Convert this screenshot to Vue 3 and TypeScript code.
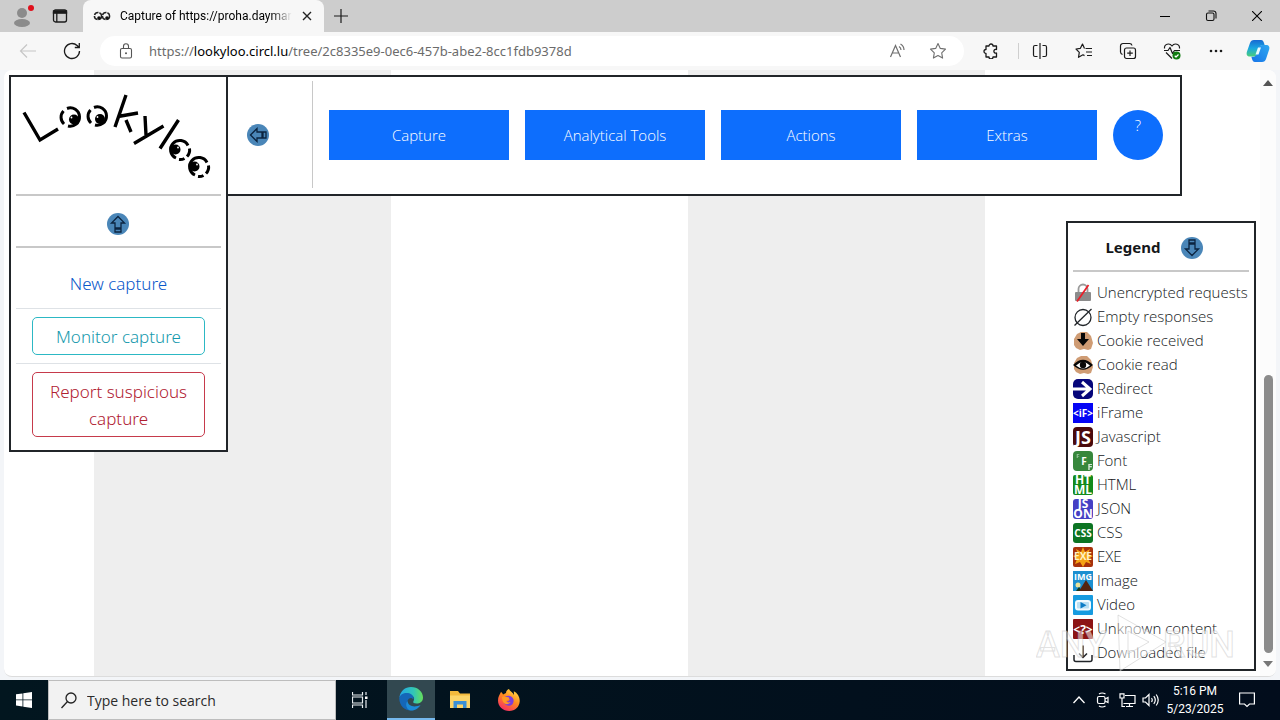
<script setup lang="ts">
interface LegendItem {
  kind: string
  label: string
}

interface Tile {
  kind: string
  text: string
  fill: string
  radius: number
  size: number
  y: number
}

const menus: string[] = ['Capture', 'Analytical Tools', 'Actions', 'Extras']

const legend: LegendItem[] = [
  { kind: 'insecure', label: 'Unencrypted requests' },
  { kind: 'empty', label: 'Empty responses' },
  { kind: 'received', label: 'Cookie received' },
  { kind: 'read', label: 'Cookie read' },
  { kind: 'redirect', label: 'Redirect' },
  { kind: 'iframe', label: 'iFrame' },
  { kind: 'js', label: 'Javascript' },
  { kind: 'font', label: 'Font' },
  { kind: 'html', label: 'HTML' },
  { kind: 'json', label: 'JSON' },
  { kind: 'css', label: 'CSS' },
  { kind: 'exe', label: 'EXE' },
  { kind: 'image', label: 'Image' },
  { kind: 'video', label: 'Video' },
  { kind: 'unknown', label: 'Unknown content' },
  { kind: 'download', label: 'Downloaded file' },
]

const tiles: Tile[] = [
  { kind: 'iframe', text: '<iF>', fill: '#0505f5', radius: 0, size: 10, y: 14 },
  { kind: 'js', text: 'JS', fill: '#4a0a0c', radius: 4, size: 18, y: 17 },
  { kind: 'css', text: 'CSS', fill: '#0c7423', radius: 3, size: 10, y: 14 },
  { kind: 'unknown', text: '<?>', fill: '#8c1414', radius: 1, size: 12, y: 15 },
]

const tileFor = (kind: string): Tile | undefined => tiles.find((t) => t.kind === kind)
</script>

<template>
  <div class="desktop">
    <header class="tabstrip">
      <button class="plain profile" aria-label="Profile">
        <svg width="28" height="28" viewBox="0 0 28 28">
          <circle cx="14" cy="11" r="5" fill="#8b8b8b" />
          <ellipse cx="14" cy="21" rx="8" ry="4" fill="#8b8b8b" />
          <circle cx="23" cy="6" r="3" fill="#e0101c" />
        </svg>
      </button>
      <button class="plain tab-actions" aria-label="Tab actions">
        <svg width="16" height="16" viewBox="0 0 16 16" fill="none" stroke="#1b1b1b" stroke-width="1.3">
          <rect x="1.5" y="2" width="13" height="12" rx="2" />
          <path d="M1.5 3h13v2.2h-13zM4.8 5v9" fill="#1b1b1b" />
        </svg>
      </button>
      <div class="tab">
        <svg width="18" height="12" viewBox="0 0 18 12" fill="none" stroke="#222" stroke-width="1.5">
          <circle cx="5" cy="6" r="3.6" stroke-dasharray="5 1" />
          <circle cx="13" cy="6" r="3.6" stroke-dasharray="5 1" />
          <circle cx="6" cy="8" r="1.8" fill="#111" stroke="none" />
          <circle cx="14" cy="8" r="1.8" fill="#111" stroke="none" />
        </svg>
        <span class="tab-title">Capture of https://proha.daymar</span>
        <button class="plain tab-close" aria-label="Close tab">
          <svg width="10" height="10" viewBox="0 0 10 10" stroke="#222" stroke-width="1.4"><path d="M1 1l8 8M9 1l-8 8" /></svg>
        </button>
      </div>
      <button class="plain new-tab" aria-label="New tab">
        <svg width="14" height="14" viewBox="0 0 14 14" stroke="#1b1b1b" stroke-width="1.2"><path d="M7 0v14M0 7h14" /></svg>
      </button>
      <div class="grow"></div>
      <button class="plain win" aria-label="Minimize">
        <svg width="10" height="10" viewBox="0 0 10 10"><path d="M0 5.5h10" stroke="#000" /></svg>
      </button>
      <button class="plain win" aria-label="Restore">
        <svg width="12" height="12" viewBox="0 0 12 12" fill="none" stroke="#111" stroke-width="1.1">
          <rect x="1.5" y="3" width="7.5" height="7.5" rx="1.5" />
          <path d="M3.5 1h5a2.5 2.5 0 0 1 2.5 2.5v5" />
        </svg>
      </button>
      <button class="plain win" aria-label="Close">
        <svg width="10" height="10" viewBox="0 0 10 10" stroke="#000" stroke-width="1.1"><path d="M0 0l10 10M10 0L0 10" /></svg>
      </button>
    </header>

    <nav class="toolbar">
      <button class="plain tool first" aria-label="Back">
        <svg width="18" height="18" viewBox="0 0 18 18" fill="none" stroke="#c6c6c6" stroke-width="1.2"><path d="M17 9H1.5M8 2.5L1.5 9 8 15.5" /></svg>
      </button>
      <button class="plain tool" aria-label="Refresh">
        <svg width="18" height="18" viewBox="0 0 18 18" fill="none" stroke="#1b1b1b" stroke-width="1.3">
          <path d="M16.5 9a7.5 7.5 0 1 1-2.4-5.5L16 5.3M16.3 1v4.5h-4.5" />
        </svg>
      </button>
      <div class="address">
        <svg width="14" height="16" viewBox="0 0 14 16" fill="none" stroke="#555" stroke-width="1.1">
          <rect x="1.5" y="5.5" width="11" height="9.5" rx="1.5" />
          <path d="M4.5 5.5V3.3a2.500 2.500 0 0 1 5 0v2.200" />
          <circle cx="7" cy="10.3" r="1" fill="#555" stroke="none" />
        </svg>
        <a class="url" href="#">https://<b>lookyloo.circl.lu</b>/tree/2c8335e9-0ec6-457b-abe2-8cc1fdb9378d</a>
        <button class="plain in-bar" aria-label="Read aloud">
          <svg width="18" height="16" viewBox="0 0 18 16" fill="none" stroke="#6f6f6f" stroke-width="1.2">
            <path d="M1.5 14L6.5 2.5 11.5 14M3.2 10h6.6M10 3.5a4 4 0 0 1 2 3.5M11.5 1a7 7 0 0 1 3.5 6" />
          </svg>
        </button>
        <button class="plain in-bar" aria-label="Favorite">
          <svg width="18" height="18" viewBox="0 0 18 18" fill="none" stroke="#6f6f6f" stroke-width="1.1" stroke-linejoin="round">
            <path d="M9 1.5l2.3 4.9 5.2.7-3.8 3.7.9 5.3L9 13.6l-4.6 2.5.9-5.3L1.5 7.1l5.2-.7z" />
          </svg>
        </button>
      </div>
      <button class="plain tool ext" aria-label="Extensions">
        <svg width="16" height="16" viewBox="0 0 16 16" fill="none" stroke="#1b1b1b" stroke-width="1.3" stroke-linejoin="round">
          <path d="M3 3h3a2 2 0 0 1 4 0h3.5v3.5a1.900 1.900 0 1 0 0 3.5v4H10a2 2 0 0 1-4 0H3v-3.500a2 2 0 0 1 0-4z" />
        </svg>
      </button>
      <span class="sep"></span>
      <button class="plain tool" aria-label="Split screen">
        <svg width="16" height="16" viewBox="0 0 16 16" fill="none" stroke="#1b1b1b" stroke-width="1.2">
          <path d="M5.5 2.5H3A1.5 1.5 0 0 0 1.5 4v8A1.5 1.5 0 0 0 3 13.5h2.5M10.5 2.5H13A1.5 1.5 0 0 1 14.5 4v8a1.5 1.5 0 0 1-1.5 1.5h-2.5M8 0v16" />
        </svg>
      </button>
      <button class="plain tool" aria-label="Favorites">
        <svg width="18" height="18" viewBox="0 0 18 18" fill="none" stroke="#1b1b1b" stroke-width="1.2" stroke-linejoin="round">
          <path d="M10.5 6.5H17M11 10h6M12 13.5h5M9.5 6.5L7.5 2 5.4 6.3l-4.4.7 3.300 3.300-.8 5L8 12.800l1.500.8" />
        </svg>
      </button>
      <button class="plain tool" aria-label="Collections">
        <svg width="18" height="18" viewBox="0 0 18 18" fill="none" stroke="#1b1b1b" stroke-width="1.2">
          <rect x="5.5" y="6" width="11" height="10.5" rx="2" />
          <path d="M3.5 12.5A3 3 0 0 1 1.5 10V4a2.5 2.5 0 0 1 2.5-2.5h6.5A2.5 2.5 0 0 1 13 3.5M11 8.5v5.5M8.2 11.200h5.600" />
        </svg>
      </button>
      <button class="plain tool" aria-label="Browser essentials">
        <svg width="18" height="18" viewBox="0 0 18 18" fill="none" stroke="#1b1b1b" stroke-width="1.2" stroke-linejoin="round">
          <path d="M1.5 6.5C1 2 6.5.5 9 4c2.500-3.500 8-2 7.500 2.500M1 8.500h4l2-3 2.500 6 2-3H17M3 10.500l6 6" />
          <circle cx="13.5" cy="13.5" r="4" fill="#107c10" stroke="none" />
          <path d="M11.700 13.800l1.300 1.200 2.500-2.500" stroke="#fff" />
        </svg>
      </button>
      <button class="plain tool" aria-label="More">
        <svg width="14" height="4" viewBox="0 0 14 4" fill="#1b1b1b"><circle cx="2" cy="2" r="1.3" /><circle cx="7" cy="2" r="1.3" /><circle cx="12" cy="2" r="1.3" /></svg>
      </button>
      <button class="plain tool copilot" aria-label="Copilot">
        <svg width="24" height="24" viewBox="0 0 24 24">
          <defs>
            <linearGradient id="cpA" x1="0" y1="0" x2="0" y2="1"><stop offset="0" stop-color="#1769d2" /><stop offset="0.5" stop-color="#1aa7e0" /><stop offset="1" stop-color="#4bcf7a" /></linearGradient>
            <linearGradient id="cpB" x1="1" y1="0" x2="0" y2="1"><stop offset="0" stop-color="#2fa8f0" /><stop offset="1" stop-color="#1673e8" /></linearGradient>
          </defs>
          <path d="M8 1h7c2 0 2.500 1.500 3 3l.6 2c-3-.4-4.600.5-5.400 3l-2 6c-.6 2-1.800 2.500-3.600 2.500H4c-3 0-4-2-3-5L4 4c.7-2 1.800-3 4-3z" fill="url(#cpA)" />
          <path d="M16 23H9c-2 0-2.500-1.500-3-3l-.6-2.300c3 .4 4.600-.5 5.400-3l2-6c.6-2 1.800-2.700 3.600-2.700H20c3 0 4 2 3 5l-3 9c-.7 2-1.800 3-4 3z" fill="url(#cpB)" />
          <path d="M12 8.500h3l-2.500 7H9.500z" fill="#e9fbff" />
        </svg>
      </button>
    </nav>

    <div class="frame">
      <main class="page">
        <div class="stripes" aria-hidden="true"><i></i><i></i><i></i></div>

        <aside class="side">
          <svg class="logo" viewBox="16 77 205 117" role="img" aria-label="Lookyloo" fill="none" stroke="#000" stroke-width="3.4">
            <path d="M24 112.500L40 140 58 129M126 95L115 127M118 116.500l20-3.500M126 120l5 12M145 116l1 19M163.500 126L134 143.500M178.500 120L160 148.500" />
            <g stroke-width="3">
              <path d="M67 108.500a9.200 9.200 0 1 1 1 17.500M64 124a9.200 9.200 0 0 1-.5-13" />
              <path d="M94 107.500a9.200 9.200 0 1 1 1 17.500M91 123a9.200 9.200 0 0 1-.5-13" />
              <path d="M188 145.500a9.200 9.200 0 1 0-12 12.500M189.500 148.500a9.200 9.200 0 0 1-2.500 8M184.500 158.500a9.200 9.200 0 0 1-5.500 1" />
              <path d="M207 162.500a9.200 9.200 0 1 0-12 12.500M208.500 165.500a9.200 9.200 0 0 1-2.500 8M203.500 175.500a9.200 9.200 0 0 1-5.500 1" />
            </g>
            <g fill="#000" stroke="none">
              <circle cx="74" cy="119.500" r="5" /><circle cx="100" cy="119" r="5" />
              <circle cx="175.500" cy="149.500" r="5" /><circle cx="194.500" cy="166.500" r="5" />
            </g>
            <g fill="#fff" stroke="none">
              <circle cx="71.500" cy="117.500" r="0.900" /><circle cx="97.500" cy="117" r="0.900" />
              <circle cx="178" cy="147.500" r="0.900" /><circle cx="197" cy="164.500" r="0.900" />
            </g>
          </svg>
          <hr class="rule" />
          <button class="plain collapse" aria-label="Collapse up">
            <svg width="22" height="22" viewBox="0 0 22 22" fill="none" stroke="#0b2440" stroke-width="1.3">
              <circle cx="11" cy="11" r="11" fill="#4a86b8" stroke="none" />
              <path d="M11 3.500l6.500 6.500H14v5H8v-5H4.500zM8 16h6v3H8z" />
            </svg>
          </button>
          <hr class="rule" />
          <div class="row new"><a href="#">New capture</a></div>
          <div class="row"><button class="outline teal">Monitor capture</button></div>
          <div class="row"><button class="outline red">Report suspicious capture</button></div>
        </aside>

        <section class="topbar">
          <button class="plain" aria-label="Collapse left">
            <svg width="22" height="22" viewBox="0 0 22 22" fill="none" stroke="#0b2440" stroke-width="1.3">
              <circle cx="11" cy="11" r="11" fill="#4a86b8" stroke="none" />
              <path d="M3.500 11L10 4.500V8h5v6h-5v3.500zM16 8v6h3V8z" />
            </svg>
          </button>
          <span class="vr"></span>
          <button v-for="m in menus" :key="m" class="menu">{{ m }}</button>
          <button class="help">?</button>
        </section>

        <section class="legend">
          <div class="legend-head">
            <strong>Legend</strong>
            <button class="plain" aria-label="Collapse down">
              <svg width="22" height="22" viewBox="0 0 22 22" fill="none" stroke="#0b2440" stroke-width="1.3">
                <circle cx="11" cy="11" r="11" fill="#4a86b8" stroke="none" />
                <path d="M11 18.500L4.500 12H8V7h6v5h3.500zM8 3h6v3H8z" />
              </svg>
            </button>
          </div>
          <hr class="rule" />
          <ul>
            <li v-for="item in legend" :key="item.kind">
              <svg width="20" height="20" viewBox="0 0 20 20" font-family="Open Sans, sans-serif" font-weight="700">
                <template v-if="tileFor(item.kind)">
                  <rect width="20" height="20" :rx="tileFor(item.kind)?.radius" :fill="tileFor(item.kind)?.fill" />
                  <text x="10" :y="tileFor(item.kind)?.y" :font-size="tileFor(item.kind)?.size" fill="#fff" text-anchor="middle">{{ tileFor(item.kind)?.text }}</text>
                </template>
                <g v-else-if="item.kind === 'insecure'">
                  <path d="M5.500 9V6a4.500 4.500 0 0 1 9 0v3" fill="none" stroke="#9a9a9a" stroke-width="1.8" />
                  <rect x="2" y="9" width="16" height="9" rx="1" fill="#8b8b8b" />
                  <path d="M4 18.500L15.500 2" stroke="#e8202a" stroke-width="1.8" />
                </g>
                <g v-else-if="item.kind === 'empty'" fill="none" stroke="#212529" stroke-width="1.3">
                  <circle cx="10" cy="10.5" r="8" /><path d="M1.500 18.500L18.500 2" />
                </g>
                <g v-else-if="item.kind === 'received'">
                  <path d="M1 8l3-5 4-2 6 0 4 4 2 7-2 6-3 1-4-1-4 1-4-2-2-3z" fill="#cf9c74" />
                  <path d="M8 2h4v6h4l-6 7-6-7h4z" fill="#080808" />
                </g>
                <g v-else-if="item.kind === 'read'">
                  <path d="M1 8l3-5 4-2 6 0 4 4 2 7-2 6-3 1-4-1-4 1-4-2-2-3z" fill="#cf9c74" />
                  <path d="M0 10Q10-.5 20 10 10 19.500 0 10z" fill="#080808" />
                  <path d="M3 10.500q7-7 14 0-7 6-14 0z" fill="#fff" />
                  <circle cx="10" cy="10" r="3.2" fill="#080808" />
                </g>
                <g v-else-if="item.kind === 'redirect'">
                  <rect width="20" height="20" rx="5" fill="#06067a" />
                  <path d="M0 10h17M9 3l8 7-8 7" fill="none" stroke="#fff" stroke-width="3" />
                </g>
                <g v-else-if="item.kind === 'font'" fill="#fff" text-anchor="middle">
                  <rect width="20" height="20" rx="4" fill="#37873c" />
                  <text x="5" y="7" font-size="6" opacity="0.5">F</text>
                  <text x="11" y="14" font-size="10">F</text>
                  <text x="17" y="19" font-size="9" opacity="0.8">F</text>
                </g>
                <g v-else-if="item.kind === 'html'" fill="#fff" text-anchor="middle" font-size="12">
                  <rect width="20" height="20" rx="2" fill="#138a1b" />
                  <text x="10" y="9">HT</text><text x="10" y="19">ML</text>
                </g>
                <g v-else-if="item.kind === 'json'" fill="#fff" text-anchor="middle" font-size="12">
                  <rect width="20" height="20" rx="3" fill="#4540c4" />
                  <text x="10" y="9">JS</text><text x="10" y="19">ON</text>
                </g>
                <g v-else-if="item.kind === 'exe'">
                  <rect width="20" height="20" rx="2" fill="#a8320c" />
                  <path d="M10 0l2 5 5-3-2 5 5 2-5 3 3 5-5-2-3 5-3-5-5 2 2-5-4-3 5-2-2-5 5 3z" fill="#f5a316" />
                  <text x="10" y="13" font-size="10" fill="#fff3c4" text-anchor="middle">EXE</text>
                </g>
                <g v-else-if="item.kind === 'image'">
                  <rect width="20" height="20" fill="#1c8fd0" />
                  <circle cx="5" cy="14" r="2.5" fill="#e8e29a" />
                  <path d="M3 20l3-4 3 4z" fill="#153a1c" />
                  <path d="M6 20l7-11 7 11z" fill="#54240f" />
                  <text x="10" y="9" font-size="9" fill="#fff" text-anchor="middle">IMG</text>
                </g>
                <g v-else-if="item.kind === 'video'">
                  <rect width="20" height="20" rx="1" fill="#179be0" />
                  <rect x="2" y="5" width="16" height="10.5" rx="3" fill="#f3fbff" />
                  <rect x="4" y="7" width="12" height="6.5" rx="1" fill="#b9dff3" />
                  <path d="M7.500 7l6 3.200-6 3.300z" fill="#0c7cc6" />
                </g>
                <g v-else fill="none" stroke="#212529" stroke-width="1.5">
                  <path d="M1 12v4.500A2 2 0 0 0 3 18.500h14a2 2 0 0 0 2-2V12M10 2.500v11.500M6 10.500l4 4 4-4" />
                </g>
              </svg>
              <span>{{ item.label }}</span>
            </li>
          </ul>
        </section>

        <svg class="mark" width="200" height="60" viewBox="0 0 200 60" font-family="Roboto, sans-serif" font-size="36" font-weight="500" aria-hidden="true">
          <g fill="#fff" fill-opacity="0.5" stroke="#b4b4b4" stroke-opacity="0.4" stroke-width="1">
            <text x="0" y="44">ANY</text>
            <path d="M82 2l48 27-46 29z" />
            <path d="M92 18l21 11-21 12z" />
            <text x="127" y="44">RUN</text>
          </g>
        </svg>
      </main>
      <div class="scrollbar" aria-hidden="true">
        <svg width="10" height="6" viewBox="0 0 10 6"><path d="M5 0l5 6H0z" fill="#555" /></svg>
        <div class="track"><div class="thumb"></div></div>
        <svg width="10" height="6" viewBox="0 0 10 6"><path d="M5 6L0 0h10z" fill="#777" /></svg>
      </div>
    </div>

    <footer class="taskbar">
      <button class="plain start" aria-label="Start">
        <svg width="16" height="16" viewBox="0 0 16 16" fill="#fff"><path d="M0 2.300L6.500 1.400v6.100H0zM7.300 1.300L16 0v7.500H7.300zM0 8.300h6.500v6.200L0 13.600zM7.300 8.300H16V16l-8.700-1.300z" /></svg>
      </button>
      <label class="search">
        <svg width="16" height="17" viewBox="0 0 16 17" fill="none" stroke="#222" stroke-width="1.3"><circle cx="10" cy="6" r="5" /><path d="M6.500 9.500L.5 16" /></svg>
        <input type="text" placeholder="Type here to search" aria-label="Search" />
      </label>
      <button class="plain app view" aria-label="Task view">
        <svg width="16" height="16" viewBox="0 0 16 16" fill="none" stroke="#e8edf0" stroke-width="1.2"><path d="M.5 0v3h10V0M.5 16v-3h10v3M.5 5h10v6H.5zM14 0v3M14 8v8" /><path d="M13 4.500h2.500v2.500H13z" fill="#fff" stroke="none" /></svg>
      </button>
      <button class="plain app active" aria-label="Edge">
        <svg width="24" height="24" viewBox="0 0 24 24">
          <defs>
            <linearGradient id="edA" x1="0" y1="0" x2="1" y2="0"><stop offset="0" stop-color="#22a7e8" /><stop offset="0.6" stop-color="#32c6b6" /><stop offset="1" stop-color="#66df5a" /></linearGradient>
          </defs>
          <path d="M.5 10C1.500 4 6 0 12 0c7 0 12 5 12 10.500 0 4-3 6-6.500 6-2.500 0-4-.8-3-2.500 1.800-3-.5-6-4-6-4 0-8 2-10 2z" fill="url(#edA)" />
          <path d="M.2 11C1 7.500 5 5.500 9 6c4 .5 6.500 4 5.300 6.500C13 10 9.500 10.500 8.500 14c-1 4.500 3.500 8.500 9 7.500-5 4-17 2-17.300-10.500z" fill="#1567b8" />
          <path d="M8.500 14c.5 5 6.500 7 13 4-3 5-7.500 6-11 5.300C6.500 21 6.500 16 8.500 14z" fill="#1c8bd8" />
        </svg>
      </button>
      <button class="plain app" aria-label="File Explorer">
        <svg width="22" height="20" viewBox="0 0 22 20"><path d="M1 1h8l2 2.500h10V18H1z" fill="#f3b93c" /><path d="M1 5.500h20V18H1z" fill="#fcd468" /><path d="M4.500 18v-7h13v7H14v-3.500H8V18z" fill="#3a8fd6" /></svg>
      </button>
      <button class="plain app" aria-label="Firefox">
        <svg width="24" height="24" viewBox="0 0 24 24">
          <defs>
            <linearGradient id="ffA" x1="0.8" y1="0" x2="0.2" y2="1"><stop offset="0" stop-color="#ffe14a" /><stop offset="0.45" stop-color="#ff8a1e" /><stop offset="1" stop-color="#f5256a" /></linearGradient>
          </defs>
          <path d="M4 4c1 .6 1.500 1.500 2 2.500L9 5c0-2 1.500-3.500 3-4 .5 2 4 3.500 5 6l-.2-3.800C20.500 5 23 9 22.700 13.500 22.300 19 18 23 12.300 23 6 23 1 18.500 1 12.500 1 9 2.500 6.500 4 4z" fill="url(#ffA)" />
          <path d="M7 10c2-3.500 8.500-3 9.500 1.500.7 4-2 6.500-5 6.300C8 17.500 6.500 15 7 13l4 .5 2-2-3-1.500z" fill="#7b3ddb" />
          <path d="M5 9c2-1 4 .2 6 .3 1.500.2 1.700 1.200.5 2l-2 1.500c0 1.500 2 2.200 4 1.200-1 2.500-4.500 3-6.500 1C5.500 13.500 5 11 5 9z" fill="#ff9a24" />
        </svg>
      </button>
      <div class="grow"></div>
      <button class="plain tray" aria-label="Show hidden icons">
        <svg width="12" height="8" viewBox="0 0 12 8" fill="none" stroke="#fff" stroke-width="1.3"><path d="M.5 7L6 1l5.500 6" /></svg>
      </button>
      <button class="plain tray" aria-label="Meet Now">
        <svg width="14" height="16" viewBox="0 0 14 16" fill="none" stroke="#fff" stroke-width="1.2"><rect x="1.5" y="4.5" width="7.5" height="7" rx="1.5" /><path d="M9 7l3-1.500v5L9 9M3 2Q6 0 9.500 2M3 14q3 2 6.500 0" /></svg>
      </button>
      <button class="plain tray" aria-label="Network">
        <svg width="17" height="15" viewBox="0 0 17 15" fill="none" stroke="#fff" stroke-width="1.2"><path d="M6 2.500h10v8H4.500M10.500 10.500v3M7 13.500h7M3 5v8.500h3M1 .8h4V5H1z" /></svg>
      </button>
      <button class="plain tray" aria-label="Volume">
        <svg width="18" height="14" viewBox="0 0 18 14" fill="none" stroke="#fff" stroke-width="1.2"><path d="M1 5h2.500L7 1.500v11L3.500 9H1zM9.500 5q1.500 2 0 4M11.800 3.200q3 3.800 0 7.600M14.200 1.500q4 5.500 0 11" /></svg>
      </button>
      <div class="clock"><span>5:16 PM</span><span>5/23/2025</span></div>
      <button class="plain notify" aria-label="Notifications">
        <svg width="16" height="16" viewBox="0 0 16 16" fill="none" stroke="#fff" stroke-width="1.2"><path d="M.6 1h14.800v11H10.500L8 14.500 5.500 12H.6z" /></svg>
      </button>
    </footer>
  </div>
</template>

<style>
body {
  margin: 0;
}
</style>

<style scoped>
.desktop {
  display: flex;
  flex-direction: column;
  height: 100vh;
  overflow: hidden;
  background: #f3f5f8;
  font-family: "Open Sans", "Noto Sans", sans-serif;
  color: #14171a;
}
.desktop * {
  box-sizing: border-box;
}
svg {
  display: block;
  flex: none;
}
button,
input {
  font-family: inherit;
}
.plain {
  display: flex;
  align-items: center;
  justify-content: center;
  padding: 0;
  border: 0;
  background: none;
}
.grow {
  flex: 1;
}
.tabstrip {
  display: flex;
  flex: none;
  height: 32px;
  background: #cdcdcd;
}
.profile {
  width: 44px;
}
.tab-actions {
  width: 32px;
}
.tab {
  display: flex;
  align-items: center;
  width: 241px;
  margin-left: 7px;
  padding: 0 10px;
  border-radius: 8px 8px 0 0;
  background: #f7f7f7;
}
.tab-title {
  flex: 1;
  margin-left: 9px;
  overflow: hidden;
  white-space: nowrap;
  font-family: Roboto, sans-serif;
  font-size: 12px;
  line-height: 16px;
  color: #000;
  mask-image: linear-gradient(to right, #000 88%, transparent);
}
.tab-close {
  width: 14px;
  height: 20px;
  margin-left: 8px;
}
.new-tab {
  width: 34px;
}
.win {
  width: 46px;
}
.toolbar {
  display: flex;
  flex: none;
  align-items: center;
  height: 38px;
  background: #f7f7f7;
}
.tool {
  width: 44px;
  height: 32px;
}
.first {
  margin-left: 6px;
}
.address {
  display: flex;
  flex: 1;
  align-items: center;
  height: 30px;
  margin-left: 6px;
  padding: 0 6px 0 19px;
  border-radius: 15px;
  background: #fff;
}
.url {
  flex: 1;
  margin-left: 16px;
  font-family: "Noto Sans", sans-serif;
  font-size: 13px;
  line-height: 20px;
  color: #6b6b6b;
  text-decoration: none;
  white-space: nowrap;
}
.url b {
  font-weight: 400;
  color: #000;
}
.in-bar {
  width: 40px;
  height: 28px;
}
.ext {
  margin-left: 5px;
}
.sep {
  width: 1px;
  height: 16px;
  margin: 0 -1px 0 5px;
  background: #cfcfcf;
}
.copilot {
  width: 40px;
  margin-right: 2px;
}
.frame {
  position: relative;
  display: flex;
  flex: 1;
  min-height: 0;
  margin: 0 4px 3px;
  overflow: hidden;
  border: 1px solid #dcdcdc;
  border-width: 0 0 1px;
  border-radius: 8px;
  background: #fff;
}
.page {
  display: flex;
  flex: 1;
  align-items: flex-start;
  padding: 5px 0 0 5px;
}
.stripes {
  position: absolute;
  inset: 0;
  display: flex;
  padding-left: 90px;
}
.stripes i {
  width: 297px;
}
.stripes i:nth-child(odd) {
  background: #eee;
}
.side {
  position: relative;
  width: 219px;
  padding: 0 5px 5px;
  border: 2px solid #212529;
  background: #fff;
  font-family: "Noto Sans", sans-serif;
  font-size: 17px;
  font-weight: 300;
}
.logo {
  width: 100%;
}
.rule {
  height: 2px;
  margin: 0;
  border: 0;
  background: #c8c8c8;
}
.collapse {
  width: 203px;
  height: 50px;
  padding-top: 6px;
}
.row {
  padding: 8px 16px;
  border-top: 1px solid #dee2e6;
  text-align: center;
  line-height: 27px;
}
.new {
  padding: 22px 0 11px;
  border-top: 0;
}
.row a {
  color: #0a58ca;
  text-decoration: none;
}
.outline {
  display: block;
  width: 100%;
  padding: 5px 10px 4px;
  border: 1px solid;
  border-radius: 5px;
  background: #fff;
  font-size: 17px;
  font-weight: 300;
  line-height: 27px;
}
.teal {
  border-color: #2cb8c4;
  color: #1599ad;
}
.red {
  border-color: #c63a4b;
  color: #b02031;
}
.topbar {
  position: relative;
  display: flex;
  align-items: center;
  gap: 16px;
  height: 121px;
  margin-left: -2px;
  padding: 0 17px 2px 19px;
  border: 2px solid #212529;
  background: #fff;
}
.vr {
  width: 1px;
  height: 107px;
  margin-left: 27px;
  background: #c8c8c8;
}
.menu,
.help {
  height: 50px;
  padding: 0;
  border: 0;
  background: #0d6efd;
  color: #fff;
  font-size: 15px;
  font-weight: 300;
  line-height: 24px;
}
.menu {
  width: 180px;
}
.help {
  width: 50px;
  padding-bottom: 20px;
  border-radius: 50%;
}
.legend {
  position: absolute;
  right: 20px;
  bottom: 5px;
  width: 190px;
  padding: 0 5px 4px;
  border: 2px solid #212529;
  background: #fff;
  font-size: 15px;
  font-weight: 300;
}
.legend-head {
  display: flex;
  align-items: center;
  justify-content: center;
  gap: 20px;
  height: 47px;
  padding: 3px 14px 0 0;
  line-height: 24px;
}
.legend-head strong {
  padding-bottom: 2px;
  font-family: "Noto Sans", sans-serif;
  font-weight: 700;
}
.legend ul {
  margin: 9px 0 0;
  padding: 0;
  list-style: none;
}
.legend li {
  display: flex;
  align-items: center;
  gap: 4px;
  height: 24px;
  line-height: 22px;
  white-space: nowrap;
}
.legend li span {
  padding-bottom: 2px;
}
.mark {
  position: absolute;
  right: 40px;
  bottom: 3px;
}
.scrollbar {
  position: relative;
  display: flex;
  flex-direction: column;
  align-items: center;
  width: 16px;
  padding: 10px 0 9px;
  background: #fcfcfc;
}
.track {
  display: flex;
  flex: 1;
  flex-direction: column;
  justify-content: flex-end;
  padding-bottom: 8px;
}
.thumb {
  width: 9px;
  height: 49%;
  border-radius: 5px;
  background: #8b8b8b;
}
.taskbar {
  display: flex;
  flex: none;
  align-items: stretch;
  height: 40px;
  background: linear-gradient(to right, #02161f, #020d1c);
}
.start {
  width: 48px;
}
.search {
  display: flex;
  align-items: center;
  gap: 10px;
  width: 288px;
  padding: 0 12px;
  border: 1px solid #bdbdbd;
  background: #f2f2f2;
}
.search input {
  flex: 1;
  min-width: 0;
  padding: 0;
  border: 0;
  outline: 0;
  background: none;
  font-size: 14px;
}
.search input::placeholder {
  color: #2b2b2b;
  opacity: 1;
}
.app {
  width: 49px;
}
.view {
  width: 51px;
  padding-right: 3px;
}
.active {
  width: 48px;
  border-bottom: 2px solid #76b9ed;
  background: #324850;
}
.tray {
  width: 24px;
}
.clock {
  display: flex;
  flex-direction: column;
  align-items: center;
  justify-content: center;
  width: 64px;
  color: #fff;
  font-family: Roboto, sans-serif;
  font-size: 12px;
  line-height: 18px;
}
.notify {
  width: 40px;
  margin-right: 13px;
}
</style>
